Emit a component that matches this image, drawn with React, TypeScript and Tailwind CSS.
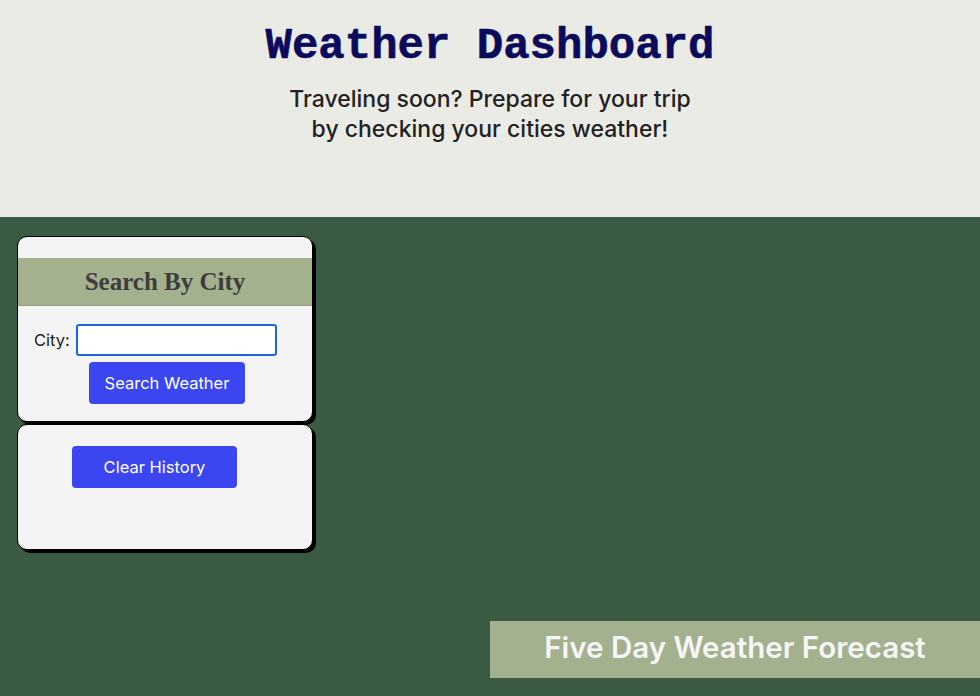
import React from "react";

export default function App() {
  const sans = { fontFamily: "Inter, 'Noto Sans', Arial, sans-serif" };
  return (
    <div className="w-[980px] h-[696px] overflow-hidden bg-[#3b5a43]" style={sans}>
      <header className="h-[217px] bg-[#ebebe6] flex flex-col items-center pt-[20px]">
        <h1
          className="text-[44px] leading-[52px] font-bold text-[#0b0b5c]"
          style={{ fontFamily: "'Liberation Mono', 'Courier New', monospace", WebkitTextStroke: "0.6px #0b0b5c" }}
        >
          Weather Dashboard
        </h1>
        <p className="mt-[12px] text-[23px] leading-[30px] text-[#222222] text-center font-medium">
          Traveling soon? Prepare for your trip
          <br />
          by checking your cities weather!
        </p>
      </header>
      <main className="flex flex-col pt-[19px]">
        <div className="flex flex-col gap-[2px] pl-[17px] w-[313px]">
          <section className="h-[186px] bg-[#f4f4f4] border border-black rounded-[10px] shadow-[3px_3px_0_#000] pt-[21px] overflow-hidden">
            <div className="h-[48px] bg-[#a3b18f] border-b border-[#8f9c7d] flex items-center justify-center">
              <h2
                className="text-[25px] font-bold text-[#3d3d3a]"
                style={{ fontFamily: "'Liberation Serif', 'Times New Roman', serif" }}
              >
                Search By City
              </h2>
            </div>
            <div className="flex items-center pl-[16px] mt-[18px]">
              <label className="text-[16.5px] text-[#222] mr-[6px]">City:</label>
              <input className="w-[201px] h-[32px] bg-white border-2 border-[#1a66d6] rounded-[3px] outline-none" />
            </div>
            <div className="flex pl-[71px] mt-[6px]">
              <button className="w-[156px] h-[42px] bg-[#3b45f0] rounded-[4px] text-white text-[16.5px]">
                Search Weather
              </button>
            </div>
          </section>
          <section className="h-[126px] bg-[#f4f4f4] border border-black rounded-[10px] shadow-[3px_3px_0_#000] pt-[21px] pl-[54px]">
            <button className="w-[165px] h-[42px] bg-[#3b45f0] rounded-[4px] text-white text-[16.5px]">
              Clear History
            </button>
          </section>
        </div>
        <div className="ml-[490px] mt-[71px] h-[57px] bg-[#a3b18f] flex items-center justify-center pb-[5px]">
          <h2 className="text-[29.5px] leading-[36px] font-semibold text-[#f6f6f6]">Five Day Weather Forecast</h2>
        </div>
      </main>
    </div>
  );
}
